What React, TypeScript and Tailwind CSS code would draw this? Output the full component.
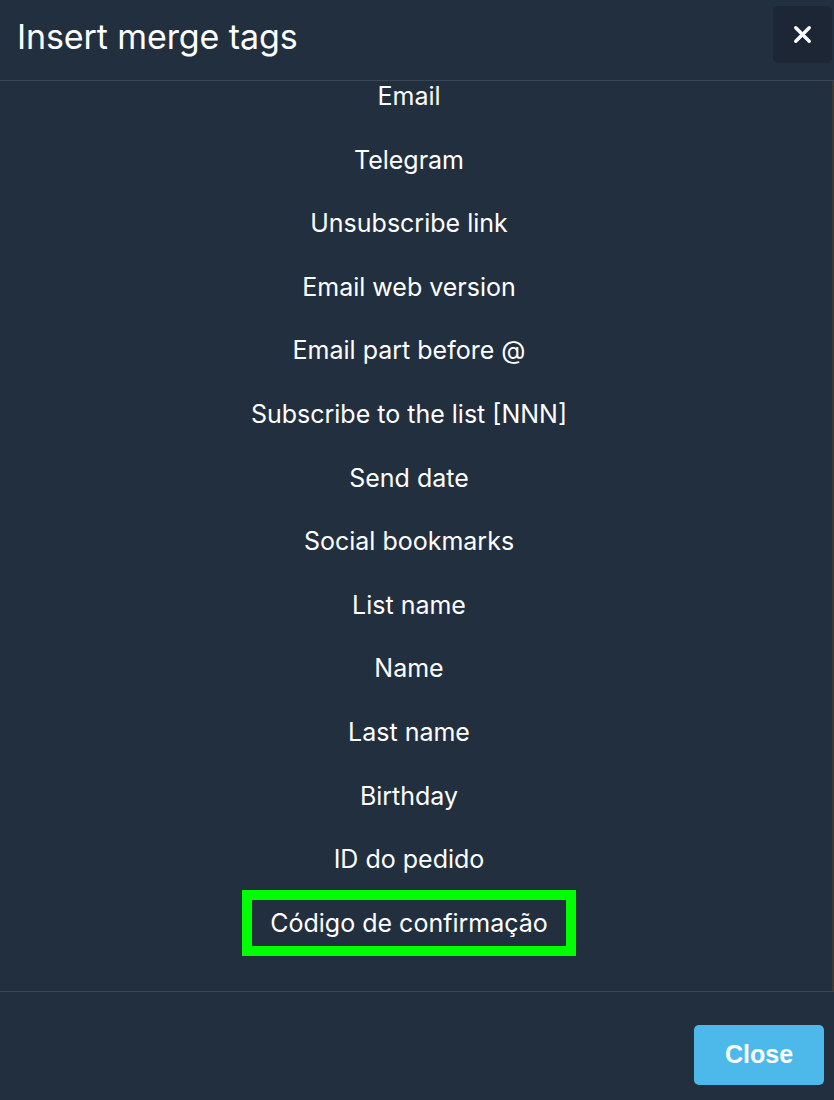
import { X } from "lucide-react";

const TAGS = [
  "Email",
  "Telegram",
  "Unsubscribe link",
  "Email web version",
  "Email part before @",
  "Subscribe to the list [NNN]",
  "Send date",
  "Social bookmarks",
  "List name",
  "Name",
  "Last name",
  "Birthday",
  "ID do pedido",
  "Código de confirmação",
];

export default function App() {
  const selected = "Código de confirmação";

  return (
    <div
      className="w-[834px] h-[1100px] bg-[#222f3f] text-white flex flex-col overflow-hidden"
      style={{ fontFamily: "Inter, 'Noto Sans', sans-serif" }}
    >
      {/* Header */}
      <div className="h-[81px] flex items-start justify-between pl-[17px] border-b border-[#3a4656] shrink-0">
        <h2 className="text-[34px] leading-none font-normal mt-[20px] tracking-[-0.1px]">Insert merge tags</h2>
        <button className="mt-[6px] mr-[2px] w-[59px] h-[57px] rounded-[5px] bg-[#1c2634] flex items-center justify-center">
          <X size={27} strokeWidth={3} className="text-white" />
        </button>
      </div>

      {/* Body */}
      <div className="h-[910px] flex shrink-0 overflow-hidden">
        <div className="flex-1 overflow-hidden pt-[1px]">
          <ul className="flex flex-col gap-[35.6px]">
            {TAGS.map((tag) => (
              <li key={tag} className="h-[28px] flex items-center justify-center">
                <span
                  className={
                    tag === selected
                      ? "h-[66px] shrink-0 px-[18px] border-[10px] border-[#00ff00] flex items-center text-[25px] leading-[28px]"
                      : "text-[25px] leading-[28px]"
                  }
                >
                  {tag}
                </span>
              </li>
            ))}
          </ul>
        </div>
        {/* scrollbar gutter */}
        <div className="w-[16px] border-r-2 border-[#3b3933]" />
      </div>

      {/* Footer */}
      <div className="flex-1 border-t border-[#3a4656] flex justify-end items-start pt-[33px] pr-[10px]">
        <button
          className="w-[130px] h-[60px] rounded-[5px] bg-[#4db9eb] text-white text-[25px] font-bold"
          style={{ fontFamily: "'Liberation Sans', Arial, sans-serif" }}
        >
          Close
        </button>
      </div>
    </div>
  );
}
